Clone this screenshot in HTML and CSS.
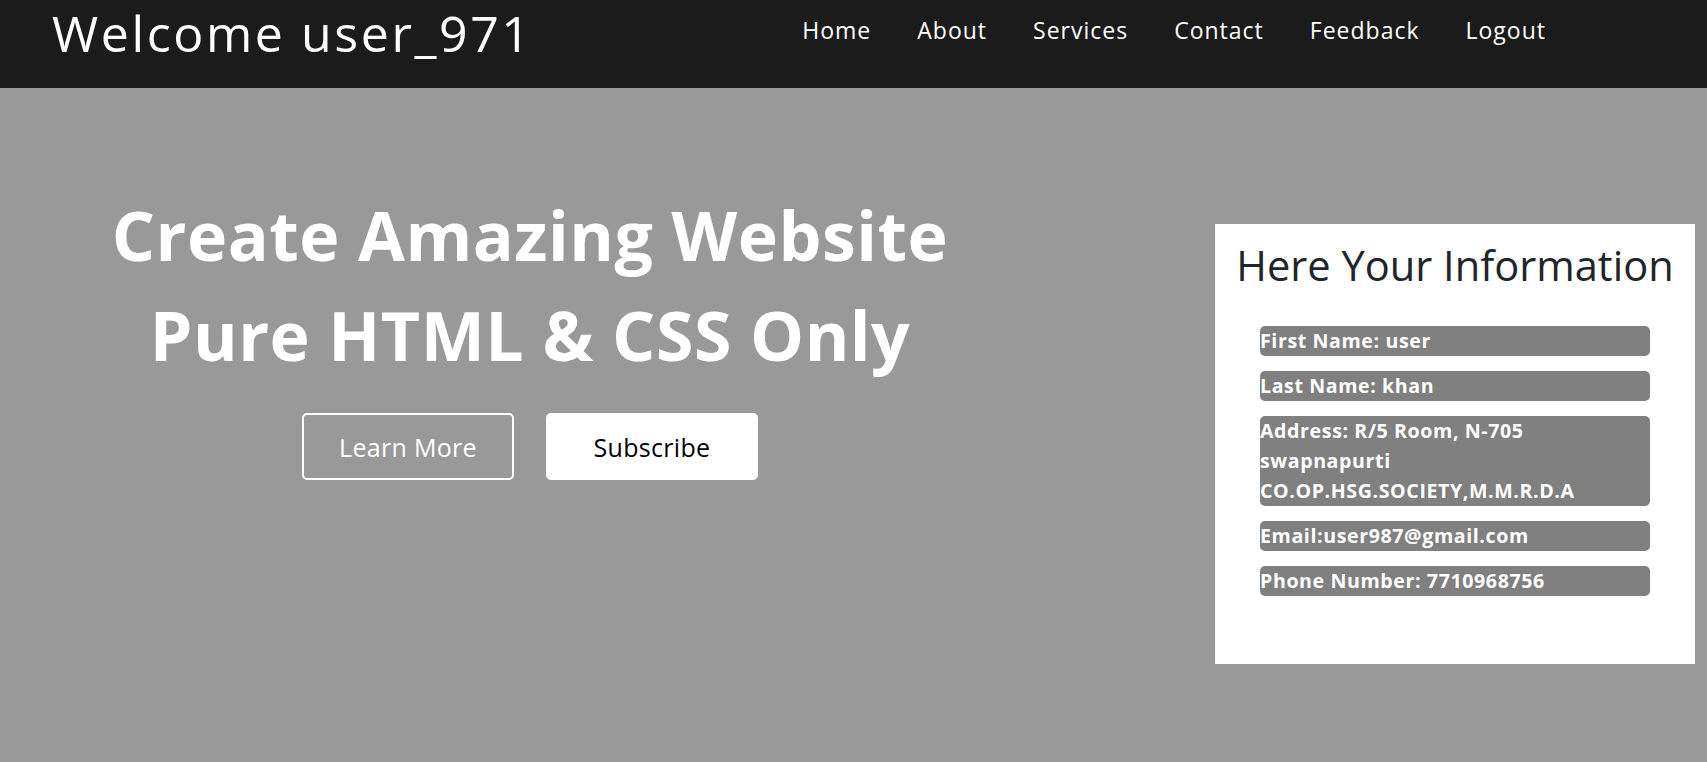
FILE: index.html
```html
<!DOCTYPE html>
<html lang="en">
<head>
<meta charset="utf-8">
<title>Welcome</title>
<link rel="stylesheet" href="styles.css">
</head>
<body>
<header class="topbar">
  <h1 class="welcome">Welcome user_971</h1>
  <nav class="nav">
    <a href="#" class="nav-link">Home</a>
    <a href="#" class="nav-link">About</a>
    <a href="#" class="nav-link">Services</a>
    <a href="#" class="nav-link">Contact</a>
    <a href="#" class="nav-link">Feedback</a>
    <a href="#" class="nav-link">Logout</a>
  </nav>
</header>
<main class="hero">
  <section class="hero-left">
    <div class="hero-title">Create Amazing Website</div>
    <div class="hero-title">Pure HTML &amp; CSS Only</div>
    <div class="buttons">
      <a href="#" class="btn btn-outline">Learn More</a>
      <a href="#" class="btn btn-solid">Subscribe</a>
    </div>
  </section>
  <aside class="info-box">
    <h2 class="info-title">Here Your Information</h2>
    <div class="fields">
      <div class="field">First Name: user</div>
      <div class="field">Last Name: khan</div>
      <div class="field">Address: R/5 Room, N-705 swapnapurti CO.OP.HSG.SOCIETY,M.M.R.D.A</div>
      <div class="field">Email:user987@gmail.com</div>
      <div class="field">Phone Number: 7710968756</div>
    </div>
  </aside>
</main>
</body>
</html>
```
FILE: styles.css
```css
* { box-sizing: border-box; }
html, body { margin: 0; padding: 0; }
body {
  font-family: "Open Sans", "Noto Sans", sans-serif;
  background: #999999;
  height: 762px;
  overflow: hidden;
}
.topbar {
  display: flex;
  align-items: flex-start;
  height: 88px;
  background: #1b1b1b;
  padding: 0 161px 0 52px;
}
.welcome {
  margin: 0;
  font-size: 50px;
  font-weight: 500;
  line-height: 1.35;
  letter-spacing: 2.6px;
  color: #ffffff;
}
.nav {
  margin-left: auto;
  display: flex;
  gap: 46px;
  padding-top: 14px;
}
.nav-link {
  color: #ffffff;
  text-decoration: none;
  font-size: 23px;
  font-weight: 500;
  letter-spacing: 1px;
}
.hero {
  display: flex;
  align-items: flex-start;
}
.hero-left {
  flex: 0 0 1060px;
  display: flex;
  flex-direction: column;
  align-items: center;
  padding-top: 97px;
}
.hero-title {
  color: #ffffff;
  font-size: 68px;
  font-weight: 700;
  line-height: 100px;
  letter-spacing: 0.5px;
  white-space: nowrap;
}
.buttons {
  display: flex;
  gap: 32px;
  margin-top: 28px;
}
.btn {
  display: flex;
  align-items: center;
  justify-content: center;
  width: 212px;
  height: 67px;
  border: 2px solid #ffffff;
  border-radius: 5px;
  font-size: 25px;
  letter-spacing: 0.3px;
  text-decoration: none;
}
.btn-outline { color: #ffffff; background: transparent; }
.btn-solid { color: #000000; background: #ffffff; }
.info-box {
  flex: 0 0 480px;
  min-width: 0;
  height: 440px;
  margin: 136px 0 0 155px;
  background: #ffffff;
  padding-top: 13px;
}
.info-title {
  margin: 0;
  text-align: center;
  font-size: 41.6px;
  font-weight: 400;
  color: #212529;
  white-space: nowrap;
}
.fields {
  display: flex;
  flex-direction: column;
  gap: 15px;
  margin-top: 33px;
  padding: 0 45px;
}
.field {
  background: #808080;
  border-radius: 5px;
  color: #ffffff;
  font-size: 19.6px;
  font-weight: 700;
  line-height: 30px;
  letter-spacing: 0.6px;
}
```
